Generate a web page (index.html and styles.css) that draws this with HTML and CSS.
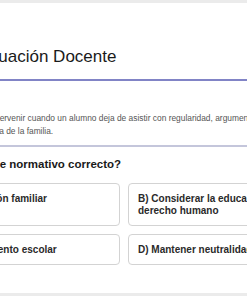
FILE: index.html
```html
<!DOCTYPE html>
<html lang="es">
<head>
    <meta charset="UTF-8">
    <meta name="viewport" content="width=device-width, initial-scale=1.0">
    <title>Guía de Evaluación Docente</title>
    <link rel="stylesheet" href="styles.css">
</head>
<body>
    <div class="page">
        <div class="card">
            <h2 class="title">Guía de Evaluación Docente</h2>

            <p class="case">Un profesor opta por no intervenir cuando un alumno deja de asistir con regularidad, argumentando que es responsabilidad absoluta de la familia.</p>

            <h3 class="question">¿Qué es el enfoque normativo correcto?</h3>

            <!-- Answer options -->
            <div class="options">
                <div class="option">A) Acatar la decisión familiar</div>
                <div class="option">B) Considerar la educación como un derecho humano</div>
                <div class="option">C) Exigir el reglamento escolar</div>
                <div class="option">D) Mantener neutralidad institucional</div>
            </div>
        </div>
    </div>
</body>
</html>
```

FILE: styles.css
```css
html,
body {
    margin: 0;
    overflow: hidden;
}

body {
    font-family: "Liberation Sans", Arial, sans-serif;
    background-color: #ebebeb;
}

.page {
    padding: 3px 0 4px;
}

.card {
    width: 448px;
    margin-left: -120px;
    padding: 42px 20px 28px;
    background-color: #fff;
}

.title {
    margin: 0;
    padding-bottom: 10px;
    font-size: 17px;
    line-height: 24px;
    font-weight: normal;
    color: #1a1a1a;
    border-bottom: 2px solid #8184c6;
}

.case {
    max-width: 392px;
    margin: 31px 0 0;
    padding-bottom: 7px;
    font-size: 8.4px;
    line-height: 13px;
    color: #555;
    border-bottom: 2px solid #c4c6db;
}

.question {
    margin: 9px 0 0;
    font-size: 11.5px;
    line-height: 16px;
    font-weight: bold;
    color: #1a1a1a;
}

.options {
    display: grid;
    grid-template-columns: 1fr 1fr;
    gap: 8px;
    margin-top: 11px;
}

.option {
    padding: 8.5px 9px;
    font-size: 10px;
    line-height: 12px;
    font-weight: bold;
    color: #2a2a2a;
    background-color: #fff;
    border: 1px solid #d3d3d3;
    border-radius: 4px;
    cursor: pointer;
}
```
